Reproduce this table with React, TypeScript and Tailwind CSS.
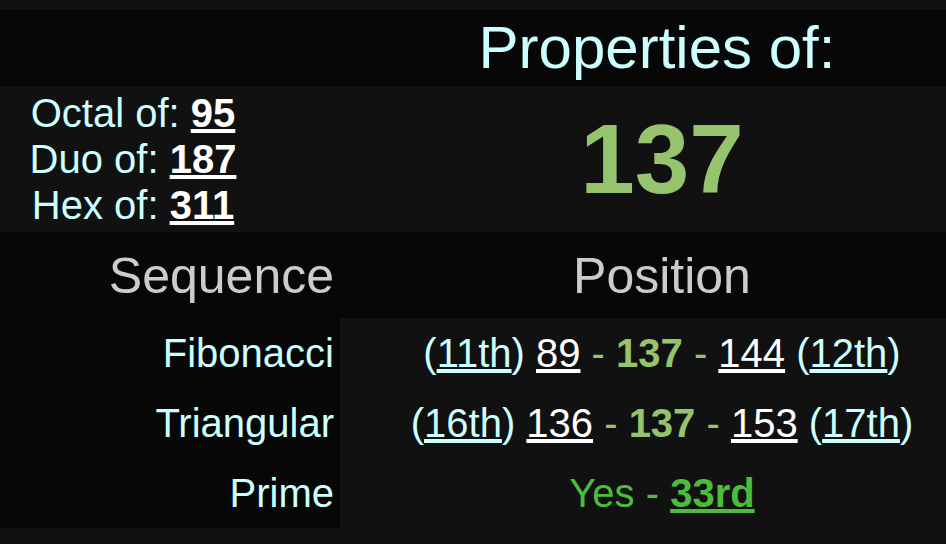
import React from 'react';

const font = { fontFamily: '"Liberation Sans", Arial, sans-serif' };

const bases = [
  { label: 'Octal of:', value: '95' },
  { label: 'Duo of:', value: '187' },
  { label: 'Hex of:', value: '311' },
];

const Sep = () => <span className="text-[#96c46e]"> - </span>;

const Link = ({ children, className = 'text-white' }: { children: React.ReactNode; className?: string }) => (
  <a className={`underline ${className}`}>{children}</a>
);

export default function App() {
  return (
    <div style={font} className="w-[946px] h-[544px] bg-[#111111] pt-[10px] overflow-hidden">
      {/* title row */}
      <div className="flex h-[76px] bg-[#070707] items-center">
        <div className="w-[266px]" />
        <div className="flex-1 pl-[102px] text-center text-[60px] leading-normal text-[#ccffff]">Properties of:</div>
      </div>

      {/* number row */}
      <div className="flex h-[146px] items-center">
        <div className="w-[266px] py-[4px] text-center text-[40px] leading-[46px] text-[#ccffff]">
          {bases.map((b) => (
            <div key={b.label}>
              {b.label} <Link className="text-white font-bold">{b.value}</Link>
            </div>
          ))}
        </div>
        <div className="flex-1 pl-[112px] text-center text-[98px] font-bold leading-normal text-[#96c46e]">137</div>
      </div>

      {/* sequence table */}
      <div className="flex h-[86px] bg-[#070707] items-end pb-[4px] text-[50px] leading-normal text-[#cccccc]">
        <div className="w-[340px] text-right pr-[6px]">Sequence</div>
        <div className="flex-1 pl-[38px] text-center">Position</div>
      </div>

      <div className="flex text-[40px] leading-[46px]">
        <div className="w-[340px] bg-[#070707] text-right pr-[6px] text-[#ccffff]">
          <div className="py-[12px]">Fibonacci</div>
          <div className="py-[12px]">Triangular</div>
          <div className="py-[12px]">Prime</div>
        </div>
        <div className="flex-1 pl-[38px] text-center text-[#ccffff]">
          <div className="py-[12px] whitespace-nowrap">
            (<Link className="text-[#ccffff]">11th</Link>) <Link>89</Link>
            <Sep />
            <span className="font-bold text-[#96c46e]">137</span>
            <Sep />
            <Link>144</Link> (<Link className="text-[#ccffff]">12th</Link>)
          </div>
          <div className="py-[12px] whitespace-nowrap">
            (<Link className="text-[#ccffff]">16th</Link>) <Link>136</Link>
            <Sep />
            <span className="font-bold text-[#96c46e]">137</span>
            <Sep />
            <Link>153</Link> (<Link className="text-[#ccffff]">17th</Link>)
          </div>
          <div className="py-[12px] text-[#4cbd3a]">
            Yes - <Link className="text-[#4cbd3a] font-bold">33rd</Link>
          </div>
        </div>
      </div>
    </div>
  );
}
